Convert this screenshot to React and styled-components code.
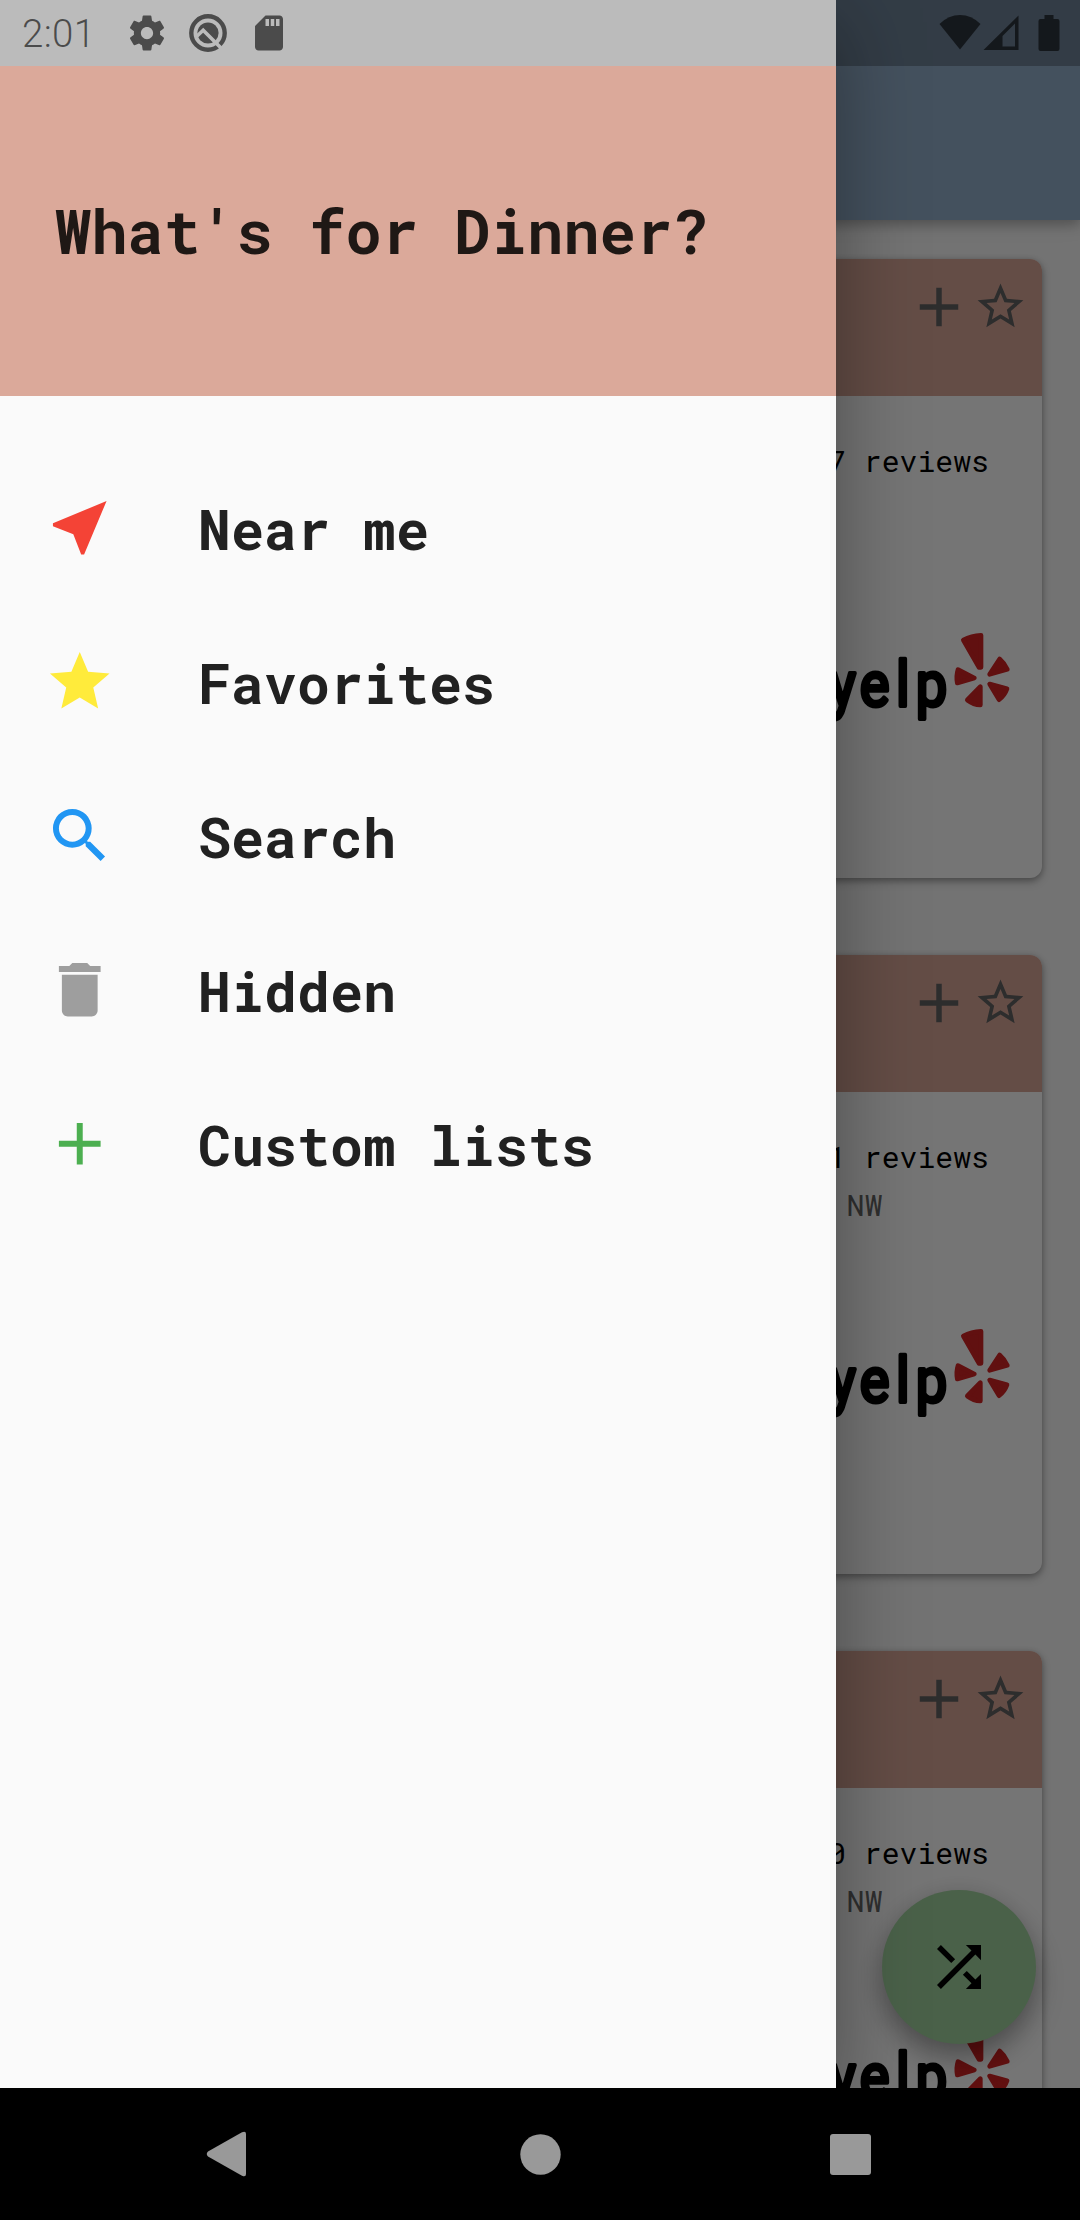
import React from 'react';
import styled, { createGlobalStyle } from 'styled-components';

const GlobalStyle = createGlobalStyle`
  * { box-sizing: border-box; }
  body { margin: 0; background: #000; }
`;

const mono = `'Roboto Mono', 'DejaVu Sans Mono', monospace`;

const Screen = styled.div`
  display: flex;
  flex-direction: column;
  width: 1080px;
  height: 2220px;
  overflow: hidden;
  background: #000;
`;

const Viewport = styled.div`
  position: relative;
  height: 2088px;
  overflow: hidden;
  background: #fafafa;
`;

const AppBar = styled.header`
  position: relative;
  height: 220px;
  background: #94b0cc;
  box-shadow: 0 5px 11px rgba(0, 0, 0, 0.22), 0 2px 22px rgba(0, 0, 0, 0.12);
`;

const CardList = styled.main`
  display: flex;
  flex-direction: column;
  gap: 77px;
  padding: 38.5px;
`;

const Card = styled.article`
  flex: none;
  display: flex;
  flex-direction: column;
  height: 619px;
  border-radius: 12px;
  overflow: hidden;
  background: #fff;
  box-shadow: 0 4px 8px rgba(0, 0, 0, 0.26), 0 1px 6px rgba(0, 0, 0, 0.2);
`;

const CardHead = styled.div`
  display: flex;
  justify-content: flex-end;
  align-items: flex-start;
  gap: 1px;
  height: 137.5px;
  padding: 15px 13.5px 0 0;
  background: #dba99a;
`;

const IconSlot = styled.span`
  display: flex;
  justify-content: center;
  align-items: center;
  width: ${(p) => p.$w}px;
  height: 66px;
  color: #636363;
`;

const CardBody = styled.div`
  display: flex;
  flex-direction: column;
  padding: 41px 28px 0 0;
`;

const Reviews = styled.div`
  height: 48px;
  padding-right: 24.5px;
  text-align: right;
  font: 400 29.8px/48px ${mono};
  color: #000;
`;

const Street = styled.div`
  height: 48px;
  padding-right: 131px;
  text-align: right;
  font: 400 30px/48px ${mono};
  color: rgba(0, 0, 0, 0.62);
`;

const LogoRow = styled.div`
  display: flex;
  justify-content: flex-end;
  margin-top: 97px;
`;

const Fab = styled.button`
  position: absolute;
  right: 44px;
  bottom: 44px;
  display: flex;
  align-items: center;
  justify-content: center;
  width: 154px;
  height: 154px;
  border: 0;
  padding: 0;
  border-radius: 50%;
  background: #a1d39f;
  color: #000;
  box-shadow: 0 16px 28px rgba(0, 0, 0, 0.26), 0 4px 24px rgba(0, 0, 0, 0.14);
`;

const Scrim = styled.div`
  position: absolute;
  inset: 0;
  background: rgba(0, 0, 0, 0.54);
`;

const Drawer = styled.aside`
  position: absolute;
  inset: 0 auto 0 0;
  width: 836px;
  padding-top: 66px;
  background: #fafafa;
  box-shadow: 0 22px 80px rgba(0, 0, 0, 0.36);
`;

const DrawerHead = styled.div`
  display: flex;
  align-items: center;
  height: 330px;
  padding: 0 55px;
  background: #dba99a;
  font: 700 60.5px/80px ${mono};
  color: #1f1815;
  white-space: pre;
`;

const Menu = styled.nav`
  display: flex;
  flex-direction: column;
  padding-top: 55px;
`;

const MenuItem = styled.a`
  display: flex;
  align-items: center;
  gap: 82.5px;
  height: 154px;
  padding-left: 44px;
  color: ${(p) => p.$tint};
`;

const MenuLabel = styled.span`
  padding-top: 2px;
  font: 700 55px/72px ${mono};
  color: #212121;
  white-space: pre;
`;

const StatusBar = styled.div`
  position: absolute;
  inset: 0 0 auto 0;
  display: flex;
  align-items: center;
  height: 66px;
  padding: 0 20px 0 22px;
  background: rgba(0, 0, 0, 0.25);
  color: rgba(0, 0, 0, 0.6);
`;

const Clock = styled.span`
  width: 103.5px;
  padding-top: 1px;
  font: 350 38.5px/66px Roboto, sans-serif;
  letter-spacing: 0.3px;
`;

const StatusGroup = styled.div`
  display: flex;
  align-items: center;
  gap: ${(p) => p.$gap || 0}px;
  margin-left: ${(p) => (p.$end ? 'auto' : 0)};
`;

const NavBar = styled.footer`
  display: grid;
  grid-template-columns: 451px 178px 451px;
  align-items: center;
  justify-items: center;
  height: 132px;
  background: #000;
  color: #999;
`;

const NavKey = styled.span`
  display: flex;
  justify-self: ${(p) => p.$side || 'center'};
  padding: ${(p) => p.$pad || 0};
`;

const paths = {
  near: 'M21 3L3 10.53v.98l6.84 2.65L12.48 21h.98L21 3z',
  star: 'M12 17.27L18.18 21l-1.64-7.03L22 9.24l-7.19-.61L12 2 9.19 8.63 2 9.24l5.46 4.73L5.82 21z',
  search:
    'M15.5 14h-.79l-.28-.27A6.471 6.471 0 0 0 16 9.5 6.5 6.5 0 1 0 9.5 16c1.61 0 3.09-.59 4.23-1.57l.27.28v.79l5 4.99L20.49 19l-4.99-5zm-6 0C7.01 14 5 11.99 5 9.5S7.01 5 9.5 5 14 7.01 14 9.5 11.99 14 9.5 14z',
  trash: 'M6 19c0 1.1.9 2 2 2h8c1.1 0 2-.9 2-2V7H6v12zM19 4h-3.5l-1-1h-5l-1 1H5v2h14V4z',
  plus: 'M19 13h-6v6h-2v-6H5v-2h6V5h2v6h6v2z',
  starOutline:
    'M22 9.24l-7.19-.62L12 2 9.19 8.63 2 9.24l5.46 4.73L5.82 21 12 17.27 18.18 21l-1.63-7.03L22 9.24zM12 15.4l-3.76 2.27 1-4.28-3.32-2.88 4.38-.38L12 6.1l1.71 4.04 4.38.38-3.32 2.88 1 4.28L12 15.4z',
  shuffle:
    'M10.59 9.17L5.41 4 4 5.41l5.17 5.17 1.42-1.41zM14.5 4l2.04 2.04L4 18.59 5.41 20 17.96 7.46 20 9.5V4h-5.5zm.33 9.41l-1.41 1.41 3.13 3.13L14.5 20H20v-5.5l-2.04 2.04-3.13-3.13z',
  gear:
    'M19.43 12.98c.04-.32.07-.64.07-.98s-.03-.66-.07-.98l2.11-1.65c.19-.15.24-.42.12-.64l-2-3.46c-.12-.22-.39-.3-.61-.22l-2.49 1c-.52-.4-1.08-.73-1.69-.98l-.38-2.65C14.46 2.18 14.25 2 14 2h-4c-.25 0-.46.18-.49.42l-.38 2.65c-.61.25-1.17.59-1.69.98l-2.49-1c-.23-.09-.49 0-.61.22l-2 3.46c-.13.22-.07.49.12.64l2.11 1.65c-.04.32-.07.65-.07.98s.03.66.07.98l-2.11 1.65c-.19.15-.24.42-.12.64l2 3.46c.12.22.39.3.61.22l2.49-1c.52.4 1.08.73 1.69.98l.38 2.65c.03.24.24.42.49.42h4c.25 0 .46-.18.49-.42l.38-2.65c.61-.25 1.17-.59 1.69-.98l2.49 1c.23.09.49 0 .61-.22l2-3.46c.12-.22.07-.49-.12-.64l-2.11-1.65zM12 15.5c-1.93 0-3.5-1.57-3.5-3.5s1.57-3.5 3.5-3.5 3.5 1.57 3.5 3.5-1.57 3.5-3.5 3.5z',
  sdCard:
    'M18 2h-8L4.02 8 4 20c0 1.1.9 2 2 2h12c1.1 0 2-.9 2-2V4c0-1.1-.9-2-2-2zm-6 6h-2V4h2v4zm3 0h-2V4h2v4zm3 0h-2V4h2v4z',
};

function Icon({ name, size }) {
  return (
    <svg width={size} height={size} viewBox="0 0 24 24" fill="currentColor">
      <path d={paths[name]} />
    </svg>
  );
}

function ZoomBadge() {
  return (
    <svg width="42" height="42" viewBox="0 0 42 42">
      <mask id="badge-cut">
        <rect width="42" height="42" fill="#fff" />
        <path d="M9 25L16.2 18.2L37 39" fill="none" stroke="#000" strokeWidth="3.6" />
      </mask>
      <g mask="url(#badge-cut)">
        <circle cx="21" cy="21" r="16.7" fill="none" stroke="currentColor" strokeWidth="4.4" />
        <circle cx="21" cy="21" r="10.6" fill="currentColor" />
      </g>
    </svg>
  );
}

function Signals() {
  return (
    <svg width="122" height="40" viewBox="936.5 13 122 40" fill="currentColor">
      <path d="M938 24Q947 15 958.5 15T979 24L958.5 49.5Z" />
      <path fillRule="evenodd" d="M982 50L1017 15.5V50ZM1001 46.5H1013.5V23.5L1001 36Z" />
      <path d="M1043 15h9v4h4q2 0 2 2v28q0 2-2 2h-17q-2 0-2-2V21q0-2 2-2h4z" />
    </svg>
  );
}

function YelpLogo() {
  return (
    <svg width="190" height="94" viewBox="10 628 570 282">
      <g transform="scale(0.88 1)">
        <text
          x="29 133 257 324"
          y="855"
          fontFamily="Roboto, sans-serif"
          fontSize="191"
          fontWeight="400"
          stroke="#000"
          strokeWidth="12"
          strokeLinejoin="round"
        >
          yelp
        </text>
      </g>
      <g fill="#d32323" stroke="#d32323" strokeWidth="14" strokeLinejoin="round">
        <path d="M428 658Q452 645 481 644V740L475 740Z" />
        <path d="M537 715Q552 728 560 746L507 761Z" />
        <path d="M507 790L559 804Q552 824 535 837Z" />
        <path d="M479 798V853Q459 852 440 838Z" />
        <path d="M412 747Q406 766 410 787L461 772Z" />
      </g>
    </svg>
  );
}

const cards = [
  { id: 1, reviews: '7 reviews', street: '' },
  { id: 2, reviews: '1 reviews', street: 'NW' },
  { id: 3, reviews: '0 reviews', street: 'NW' },
];

const menu = [
  { icon: 'near', label: 'Near me', tint: '#f44336' },
  { icon: 'star', label: 'Favorites', tint: '#ffeb3b' },
  { icon: 'search', label: 'Search', tint: '#2196f3' },
  { icon: 'trash', label: 'Hidden', tint: '#9e9e9e' },
  { icon: 'plus', label: 'Custom lists', tint: '#4caf50' },
];

function RestaurantCard({ reviews, street }) {
  return (
    <Card>
      <CardHead>
        <IconSlot $w={66}>
          <Icon name="plus" size={66} />
        </IconSlot>
        <IconSlot $w={55}>
          <Icon name="starOutline" size={55} />
        </IconSlot>
      </CardHead>
      <CardBody>
        <Reviews>{reviews}</Reviews>
        <Street>{street}</Street>
        <LogoRow>
          <YelpLogo />
        </LogoRow>
      </CardBody>
    </Card>
  );
}

export default function App() {
  return (
    <>
      <GlobalStyle />
      <Screen>
        <Viewport>
          <AppBar />
          <CardList>
            {cards.map((c) => (
              <RestaurantCard key={c.id} {...c} />
            ))}
          </CardList>
          <Fab aria-label="Shuffle">
            <Icon name="shuffle" size={66} />
          </Fab>
          <Scrim />
          <Drawer>
            <DrawerHead>What's for Dinner?</DrawerHead>
            <Menu>
              {menu.map((m) => (
                <MenuItem key={m.label} $tint={m.tint}>
                  <Icon name={m.icon} size={71.5} />
                  <MenuLabel>{m.label}</MenuLabel>
                </MenuItem>
              ))}
            </Menu>
          </Drawer>
          <StatusBar>
            <Clock>2:01</Clock>
            <StatusGroup $gap={19}>
              <Icon name="gear" size={42} />
              <ZoomBadge />
              <Icon name="sdCard" size={42} />
            </StatusGroup>
            <StatusGroup $end>
              <Signals />
            </StatusGroup>
          </StatusBar>
        </Viewport>
        <NavBar>
          <NavKey $side="start" $pad="0 0 0 206px">
            <svg width="40" height="46" viewBox="0 0 40 46" fill="currentColor">
              <path d="M2 20.5L36 1.2Q40 -.5 40 3V43Q40 46.5 36 44.8L2 25.5Q-.5 23 2 20.5Z" />
            </svg>
          </NavKey>
          <NavKey>
            <svg width="41" height="41" viewBox="0 0 41 41" fill="currentColor">
              <circle cx="20.5" cy="20.5" r="20.2" />
            </svg>
          </NavKey>
          <NavKey $side="start" $pad="0 0 0 201px">
            <svg width="41" height="41" viewBox="0 0 41 41" fill="currentColor">
              <rect width="41" height="41" rx="3" />
            </svg>
          </NavKey>
        </NavBar>
      </Screen>
    </>
  );
}
